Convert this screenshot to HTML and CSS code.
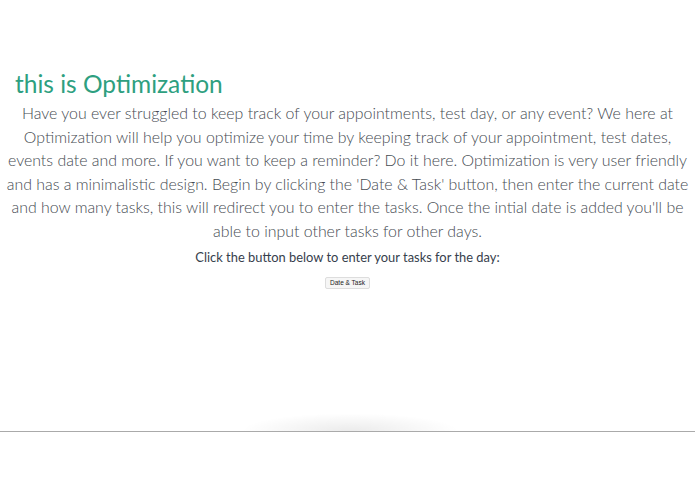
FILE: index.html
```html
<!DOCTYPE html>
<html>
<head>
<meta charset="utf-8">
<link rel="stylesheet" href="styles.css">
</head>
<body>
<div class="page">
  <h1 class="title">this is Optimization</h1>
  <p class="intro">Have you ever struggled to keep track of your appointments, test day, or any event? We here at Optimization will help you optimize your time by keeping track of your appointment, test dates, events date and more. If you want to keep a reminder? Do it here. Optimization is very user friendly and has a minimalistic design. Begin by clicking the 'Date &amp; Task' button, then enter the current date and how many tasks, this will redirect you to enter the tasks. Once the intial date is added you'll be able to input other tasks for other days.</p>
  <h2 class="subtitle">Click the button below to enter your tasks for the day:</h2>
  <div class="actions"><button class="btn">Date &amp; Task</button></div>
</div>
<div class="footer">
  <div class="shadow"></div>
</div>
</body>
</html>
```
FILE: styles.css
```css
html, body {
  margin: 0;
  padding: 0;
  background: #fff;
}
body {
  font-family: Lato, "Open Sans", sans-serif;
  width: 695px;
  height: 494px;
  overflow: hidden;
}
.page {
  height: 431px;
  padding-top: 68px;
  box-sizing: border-box;
}
.title {
  margin: 0 0 0 15px;
  font-weight: 400;
  font-size: 24.5px;
  line-height: 32px;
  color: #2e9f80;
}
.intro {
  margin: 1px 0 0;
  padding: 0;
  text-align: center;
  font-family: "Lato Light", Lato, sans-serif;
  font-weight: 300;
  font-size: 15.9px;
  line-height: 23.6px;
  color: #464b52;
}
.subtitle {
  margin: 4px 0 0;
  text-align: center;
  font-weight: 400;
  font-size: 12.9px;
  line-height: 20px;
  color: #36404c;
}
.actions {
  display: flex;
  justify-content: center;
  margin-top: 10px;
}
.btn {
  font-family: "Liberation Sans", Arial, sans-serif;
  font-size: 6.5px;
  line-height: 8px;
  padding: 1px 4px;
  color: #222;
  background: #f6f6f6;
  border: 1px solid #ddd;
  border-radius: 2px;
}
.footer {
  position: relative;
  height: 1px;
  background: #aaa;
}
.shadow {
  position: absolute;
  left: 240px;
  width: 220px;
  bottom: 1px;
  height: 18px;
  background: radial-gradient(ellipse at 50% 100%, rgba(0,0,0,0.08), rgba(0,0,0,0) 70%);
}
```
